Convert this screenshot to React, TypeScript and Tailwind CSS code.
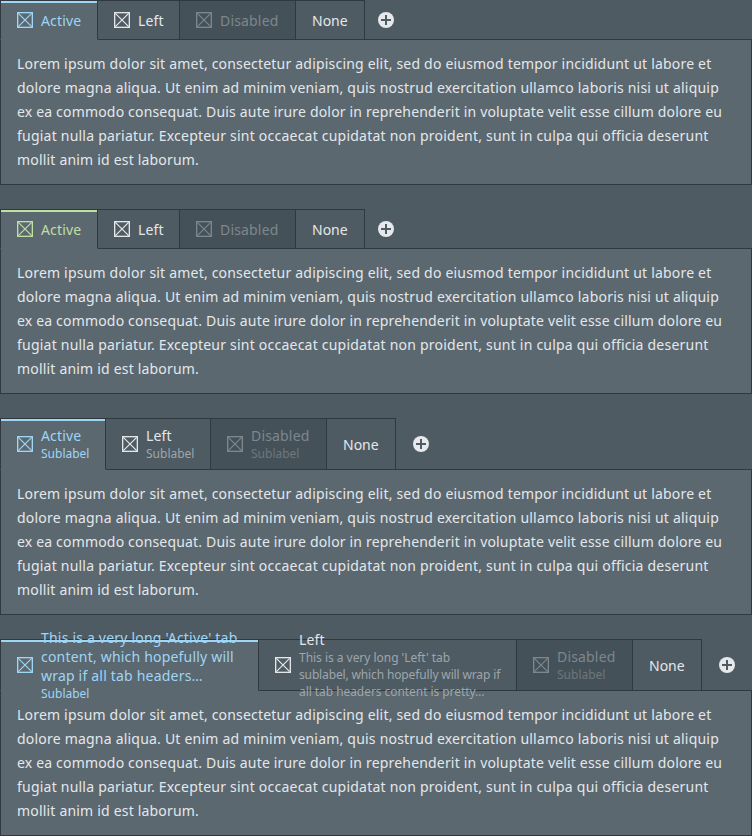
import React from 'react';

function BoxIcon() {
  return (
    <svg width="16" height="16" viewBox="0 0 24 24" fill="none" stroke="currentColor" className="shrink-0">
      <rect x="1" y="1" width="22" height="22" strokeWidth="2" />
      <path d="M2 2 22 22M22 2 2 22" strokeWidth="1.8" />
    </svg>
  );
}

function AddIcon() {
  return (
    <svg width="16" height="16" viewBox="0 0 16 16" className="text-[#e6e8ec]">
      <circle cx="8" cy="8" r="8" fill="currentColor" />
      <path d="M8 3v10M3 8h10" stroke="#4f5b62" strokeWidth="2" />
    </svg>
  );
}

type TabProps = {
  state?: 'active' | 'success' | 'normal' | 'disabled';
  label: React.ReactNode;
  sublabel?: React.ReactNode;
  icon?: boolean;
  width: string;
};

const tabStyles = {
  active: 'border-l border-b-[#5b6870] bg-[#5b6870] text-[#9fd5f5]',
  success: 'border-l border-b-[#5b6870] bg-[#5b6870] text-[#c0dfa2]',
  normal: 'text-[#e4e7ea]',
  disabled: 'bg-[#455158] text-[#7d878e]',
};

const sublabelStyles = {
  active: 'text-[#9fd5f5]',
  success: 'text-[#c0dfa2]',
  normal: 'text-[#9ea6ac]',
  disabled: 'text-[#6c777e]',
};

function Tab({ state = 'normal', label, sublabel, icon = true, width }: TabProps) {
  const selected = state === 'active' || state === 'success';
  return (
    <div
      className={`relative flex shrink-0 items-center gap-2 border-y border-r border-[#2f393f] pl-4 ${width} ${tabStyles[state]}`}
    >
      {icon && <BoxIcon />}
      <div className="whitespace-nowrap">
        <div className={`leading-[19px] ${icon ? 'tracking-[0.17px]' : ''}`}>{label}</div>
        {sublabel && <div className={`text-[12px] leading-[17px] ${sublabelStyles[state]}`}>{sublabel}</div>}
      </div>
      {selected && <div className="absolute inset-x-0 top-0 h-0.5 bg-current" />}
    </div>
  );
}

function Pane({ children, tall = false }: { children: React.ReactNode; tall?: boolean }) {
  return (
    <section>
      <div className={`relative -mb-px flex ${tall ? 'h-[52px]' : 'h-10'}`}>
        {children}
        <button className={`flex items-center justify-center ${tall ? 'w-[50px]' : 'w-[42px]'}`}>
          <AddIcon />
        </button>
      </div>
      <div className="h-[146px] whitespace-nowrap border border-[#2f393f] bg-[#5b6870] px-4 py-3 leading-6">
        <div className="tracking-[0.198px]">
          Lorem ipsum dolor sit amet, consectetur adipiscing elit, sed do eiusmod tempor incididunt ut labore et
        </div>
        <div className="tracking-[0.21px]">
          dolore magna aliqua. Ut enim ad minim veniam, quis nostrud exercitation ullamco laboris nisi ut aliquip
        </div>
        <div className="tracking-[0.178px]">
          ex ea commodo consequat. Duis aute irure dolor in reprehenderit in voluptate velit esse cillum dolore eu
        </div>
        <div className="tracking-[0.222px]">
          fugiat nulla pariatur. Excepteur sint occaecat cupidatat non proident, sunt in culpa qui officia deserunt
        </div>
        <div className="tracking-[0.19px]">mollit anim id est laborum.</div>
      </div>
    </section>
  );
}

export default function App() {
  return (
    <main className="flex h-[836px] w-[752px] flex-col gap-6 overflow-hidden bg-[#4f5b62] font-['Noto_Sans',sans-serif] text-[14px] text-[#e4e7ea]">
      <Pane>
        <Tab state="active" label="Active" width="w-[98px]" />
        <Tab label="Left" width="w-[82px]" />
        <Tab state="disabled" label="Disabled" width="w-[116px]" />
        <Tab label="None" icon={false} width="w-[69px]" />
      </Pane>
      <Pane>
        <Tab state="success" label="Active" width="w-[98px]" />
        <Tab label="Left" width="w-[82px]" />
        <Tab state="disabled" label="Disabled" width="w-[116px]" />
        <Tab label="None" icon={false} width="w-[69px]" />
      </Pane>
      <Pane tall>
        <Tab state="active" label="Active" sublabel="Sublabel" width="w-[106px]" />
        <Tab label="Left" sublabel="Sublabel" width="w-[105px]" />
        <Tab state="disabled" label="Disabled" sublabel="Sublabel" width="w-[116px]" />
        <Tab label="None" icon={false} width="w-[69px]" />
      </Pane>
      <Pane tall>
        <Tab
          state="active"
          label={
            <span className="tracking-[0.2px]">
              This is a very long 'Active' tab
              <br />
              content, which hopefully will
              <br />
              wrap if all tab headers…
            </span>
          }
          sublabel="Sublabel"
          width="w-[259px]"
        />
        <Tab
          label="Left"
          sublabel={
            <>
              <div className="tracking-[-0.03px]">This is a very long 'Left' tab</div>
              <div className="tracking-[-0.14px]">sublabel, which hopefully will wrap if</div>
              <div className="tracking-[-0.06px]">all tab headers content is pretty…</div>
            </>
          }
          width="w-[258px]"
        />
        <Tab state="disabled" label="Disabled" sublabel="Sublabel" width="w-[116px]" />
        <Tab label="None" icon={false} width="w-[69px]" />
      </Pane>
    </main>
  );
}
